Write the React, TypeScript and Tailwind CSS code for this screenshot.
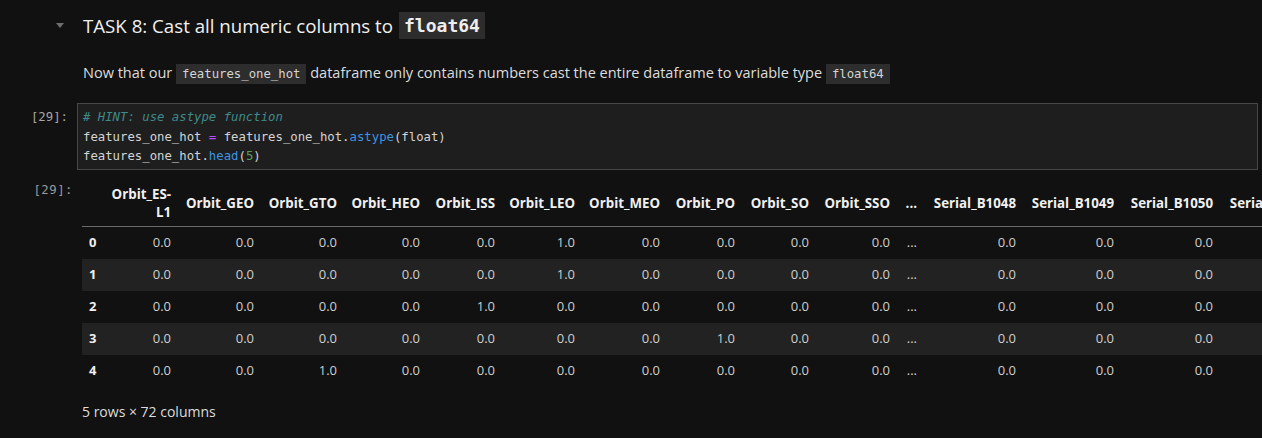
import React from 'react'

const sans = { fontFamily: '"Segoe UI", "Open Sans", "Noto Sans", sans-serif' }
const mono = { fontFamily: '"DejaVu Sans Mono", "Liberation Mono", monospace' }

const columns = [
  { name: 'Orbit_ES-L1', w: 77 },
  { name: 'Orbit_GEO', w: 83 },
  { name: 'Orbit_GTO', w: 83 },
  { name: 'Orbit_HEO', w: 83 },
  { name: 'Orbit_ISS', w: 75 },
  { name: 'Orbit_LEO', w: 80 },
  { name: 'Orbit_MEO', w: 85 },
  { name: 'Orbit_PO', w: 75 },
  { name: 'Orbit_SO', w: 74 },
  { name: 'Orbit_SSO', w: 81 },
  { name: '...', w: 27 },
  { name: 'Serial_B1048', w: 99 },
  { name: 'Serial_B1049', w: 98 },
  { name: 'Serial_B1050', w: 99 },
  { name: 'Serial_B1051', w: 99 },
]

// values for the first 10 columns, the rest are all 0.0
const rows = [
  ['0.0', '0.0', '0.0', '0.0', '0.0', '1.0', '0.0', '0.0', '0.0', '0.0'],
  ['0.0', '0.0', '0.0', '0.0', '0.0', '1.0', '0.0', '0.0', '0.0', '0.0'],
  ['0.0', '0.0', '0.0', '0.0', '1.0', '0.0', '0.0', '0.0', '0.0', '0.0'],
  ['0.0', '0.0', '0.0', '0.0', '0.0', '0.0', '0.0', '1.0', '0.0', '0.0'],
  ['0.0', '0.0', '1.0', '0.0', '0.0', '0.0', '0.0', '0.0', '0.0', '0.0'],
]

function InlineCode({ children }: { children: React.ReactNode }) {
  return (
    <span
      className="inline-block h-[20px] bg-[#2d2d2d] px-[6px] align-middle text-[12.3px] leading-[20px] text-[#d4d4d4]"
      style={mono}
    >
      {children}
    </span>
  )
}

export default function App() {
  return (
    <div className="h-[438px] w-full overflow-hidden bg-[#111111] text-[#cccccc]" style={sans}>
      {/* Markdown cell */}
      <div className="flex pt-[11px]">
        <div className="flex h-[29px] w-[83px] shrink-0 items-center justify-end pr-[19px]">
          <svg width="8" height="5" viewBox="0 0 8 5">
            <path d="M0 0 L8 0 L4 5 Z" fill="#6f6f6f" />
          </svg>
        </div>
        <div>
          <h2 className="flex h-[29px] items-center text-[18.7px] leading-[29px] text-[#f0f0f0]">
            <span>TASK 8: Cast all numeric columns to</span>
            <span
              className="ml-[6px] inline-flex h-[27px] items-center bg-[#2d2d2d] px-[5px] text-[18px] font-bold text-[#eeeeee]"
              style={mono}
            >
              float64
            </span>
          </h2>
          <p className="mt-[23px] text-[14.5px] leading-[20px] text-[#dddddd]">
            Now that our <InlineCode>features_one_hot</InlineCode> dataframe only contains numbers cast the entire
            dataframe to variable type <InlineCode>float64</InlineCode>
          </p>
        </div>
      </div>

      {/* Code cell */}
      <div className="mt-[19px] flex">
        <div
          className="w-[77px] shrink-0 pr-[9px] pt-[5px] text-right text-[12.3px] leading-[19.5px] text-[#a6a6a6]"
          style={mono}
        >
          [29]:
        </div>
        <div
          className="mr-[4px] flex-1 border border-[#474747] bg-[#1e1e1e] pb-[2px] pl-[5px] pt-[4px] text-[12.3px] leading-[19.5px] text-[#d4d4d4]"
          style={mono}
        >
          <div className="italic text-[#3f8a8a]"># HINT: use astype function</div>
          <div>
            features_one_hot <span className="text-[#b84dff]">=</span> features_one_hot.
            <span className="text-[#3d94e0]">astype</span>(float)
          </div>
          <div>
            features_one_hot.<span className="text-[#3d94e0]">head</span>(
            <span className="text-[#5a9e5a]">5</span>)
          </div>
        </div>
      </div>

      {/* Output */}
      <div className="mt-[11px] flex">
        <div
          className="w-[82px] shrink-0 pr-[9px] text-right text-[12.3px] leading-[19.5px] tracking-[0.5px] text-[#9a9a9a]"
          style={mono}
        >
          [29]:
        </div>
        <div className="min-w-0 flex-1 overflow-hidden">
          <table className="table-fixed border-collapse text-[13px]" style={{ width: 1238 }}>
            <colgroup>
              <col style={{ width: 20 }} />
              {columns.map((c) => (
                <col key={c.name} style={{ width: c.w }} />
              ))}
            </colgroup>
            <thead>
              <tr className="h-[46px] border-b border-[#6a6a6a]">
                <th />
                {columns.map((c) => (
                  <th
                    key={c.name}
                    className="pr-[8px] text-right align-middle text-[13.3px] font-bold leading-[18px] whitespace-nowrap text-[#f0f0f0]"
                  >
                    {c.name === 'Orbit_ES-L1' ? (
                      <>
                        Orbit_ES-
                        <br />
                        L1
                      </>
                    ) : (
                      c.name
                    )}
                  </th>
                ))}
              </tr>
            </thead>
            <tbody>
              {rows.map((r, i) => (
                <tr key={i} className={`h-[32px] ${i % 2 === 1 ? 'bg-[#222222]' : ''}`}>
                  <th className="pl-[7px] text-left text-[13px] font-bold text-[#f0f0f0]">{i}</th>
                  {columns.map((c, j) => (
                    <td key={c.name} className="pr-[8px] text-right whitespace-nowrap text-[#cfcfcf]">
                      {c.name === '...' ? '...' : j < 10 ? r[j] : '0.0'}
                    </td>
                  ))}
                </tr>
              ))}
            </tbody>
          </table>
          <div className="mt-[15px] text-[14px] leading-[20px] text-[#dddddd]">5 rows × 72 columns</div>
        </div>
      </div>
    </div>
  )
}
